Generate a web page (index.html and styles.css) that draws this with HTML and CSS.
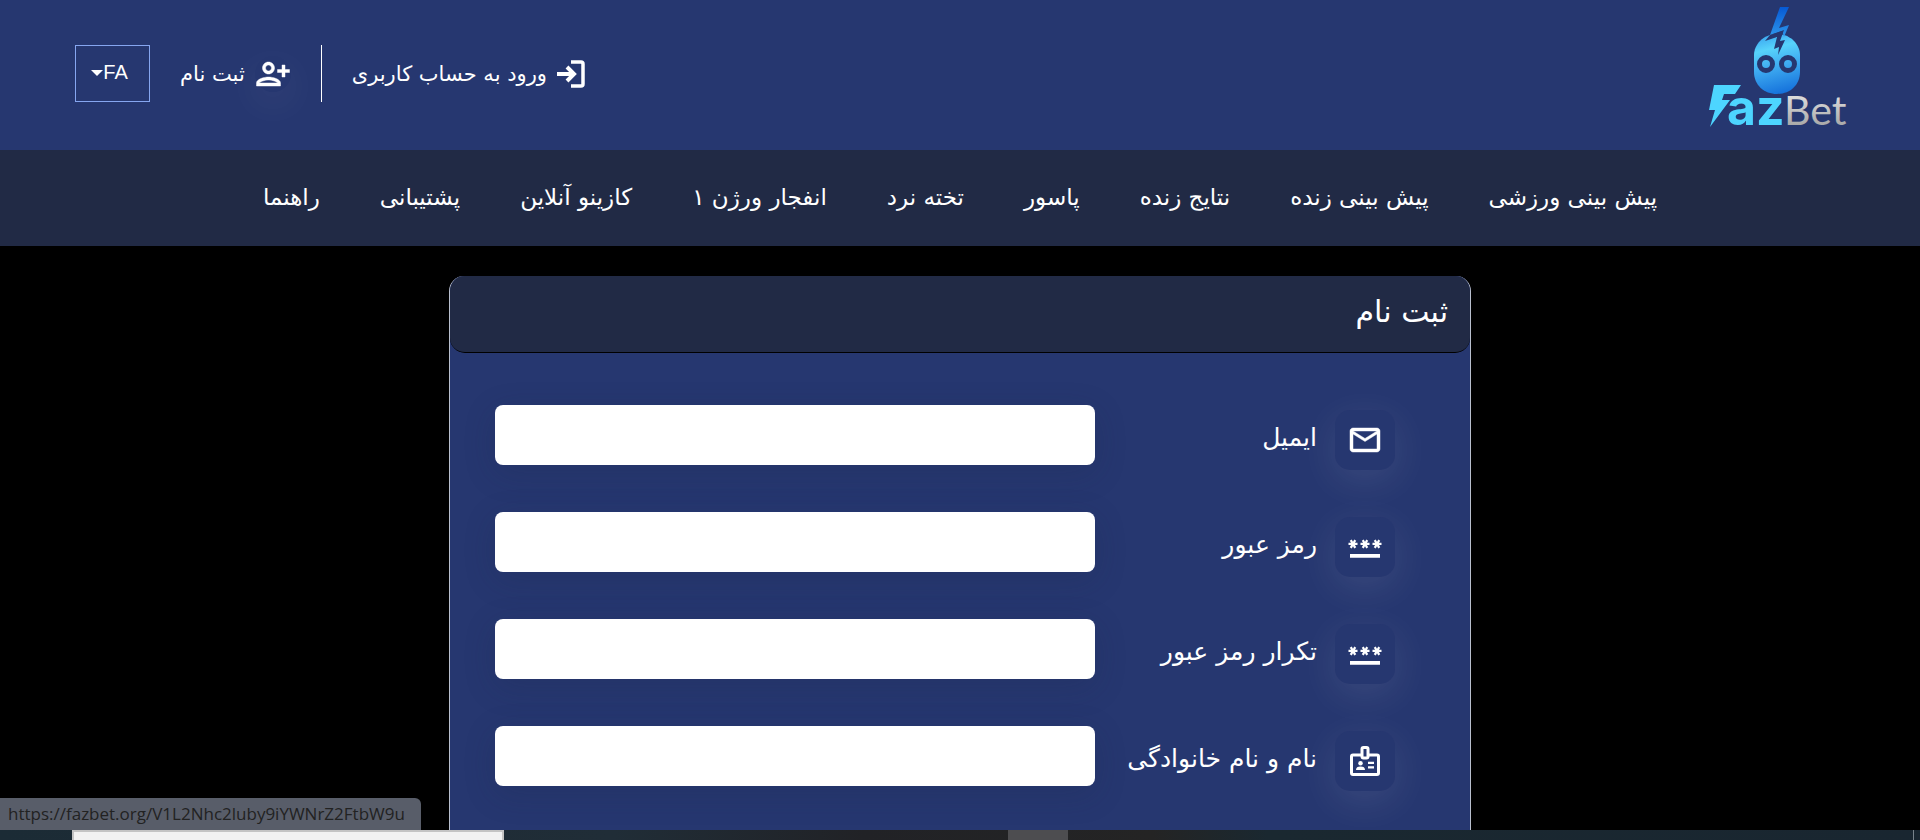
FILE: index.html
```html
<!DOCTYPE html>
<html lang="fa" dir="rtl">
<head>
    <meta charset="utf-8">
    <title>FazBet</title>
    <link rel="stylesheet" href="styles.css">
</head>
<body>
    <div class="page">
        <header class="header">
            <a class="logo" href="#" aria-label="FazBet">
                <svg width="140" height="136" viewBox="0 0 140 136">
                    <defs>
                        <linearGradient id="face" x1="0.3" y1="0" x2="0.5" y2="1">
                            <stop offset="0" stop-color="#3aa5f0"/>
                            <stop offset="0.25" stop-color="#57d3fb"/>
                            <stop offset="0.5" stop-color="#43b2f3"/>
                            <stop offset="1" stop-color="#1673dc"/>
                        </linearGradient>
                        <linearGradient id="bolt" x1="0" y1="0" x2="0" y2="1">
                            <stop offset="0" stop-color="#0659d4"/>
                            <stop offset="1" stop-color="#2e97ec"/>
                        </linearGradient>
                        <linearGradient id="silver" x1="0" y1="0" x2="0" y2="1">
                            <stop offset="0.2" stop-color="#dedede"/>
                            <stop offset="1" stop-color="#999"/>
                        </linearGradient>
                    </defs>
                    <path fill="url(#face)" d="M45 48c0-10 9-21 23-21s23 11 23 21v17c0 13-10 22-23 22S45 78 45 65z"/>
                    <path fill="url(#bolt)" d="M71 0h9L70 21l10-3-5 12-2-6-12 4z"/>
                    <path fill="#263770" d="M56 34l5-6 14-5-4 11 5-1-7 15 1-8-5 2 3-12z"/>
                    <circle cx="57" cy="57" r="6.500" fill="none" stroke="#263770" stroke-width="5"/>
                    <circle cx="79" cy="57" r="6.500" fill="none" stroke="#263770" stroke-width="5"/>
                    <path fill="#4dd5ff" d="M5 78h27l-6 9H15l-2 6h8L1 120l5-17H0z"/>
                    <text class="logo-az" x="18" y="118">az</text>
                    <text class="logo-bet" x="75" y="118" fill="url(#silver)">Bet</text>
                </svg>
            </a>
            <div class="account">
                <a class="account-link" href="#">
                    <svg width="28" height="28" viewBox="0 0 28 28" fill="none" stroke="#fff">
                        <path stroke-width="3.500" d="M14 2h10q2 0 2 2v20q0 2-2 2H14"/>
                        <path stroke-width="4" d="M0 14h17M10 7l7 7-7 7"/>
                    </svg>
                    <span>ورود به حساب کاربری</span>
                </a>
                <a class="account-link register" href="#">
                    <span class="register-icon">
                        <svg width="36" height="36" viewBox="0 0 24 24" fill="#fff" stroke="#fff" stroke-width="0.300">
                            <path d="M13 8c0-2.210-1.790-4-4-4S5 5.790 5 8s1.790 4 4 4 4-1.790 4-4zm-2 0c0 1.100-.9 2-2 2s-2-.9-2-2 .9-2 2-2 2 .9 2 2zM1 18v2h16v-2c0-2.660-5.330-4-8-4s-8 1.340-8 4zm2 0c.2-.71 3.300-2 6-2 2.690 0 5.770 1.280 6 2H3zM20 14v-3h3V9h-3V6h-2v3h-3v2h3v3h2z"/>
                        </svg>
                    </span>
                    <span>ثبت نام</span>
                </a>
                <button class="lang" type="button">FA<span class="caret"></span></button>
            </div>
        </header>

        <nav class="nav">
            <a href="#">پیش بینی ورزشی</a>
            <a href="#">پیش بینی زنده</a>
            <a href="#">نتایج زنده</a>
            <a href="#">پاسور</a>
            <a href="#">تخته نرد</a>
            <a href="#">انفجار ورژن ۱</a>
            <a href="#">کازینو آنلاین</a>
            <a href="#">پشتیبانی</a>
            <a href="#">راهنما</a>
        </nav>

        <main class="card">
            <h1 class="card-title">ثبت نام</h1>
            <form class="form">
                <div class="row">
                    <span class="icon">
                        <svg width="36" height="36" viewBox="0 0 24 24" fill="#fff" stroke="#fff" stroke-width="0.300">
                            <path d="M22 6c0-1.100-.9-2-2-2H4c-1.100 0-2 .9-2 2v12c0 1.100.9 2 2 2h16c1.100 0 2-.9 2-2V6zm-2 0l-8 5-8-5h16zm0 12H4V8l8 5 8-5v10z"/>
                        </svg>
                    </span>
                    <label for="email">ایمیل</label>
                    <input type="email" id="email">
                </div>
                <div class="row">
                    <span class="icon">
                        <svg width="36" height="36" viewBox="0 0 24 24" fill="#fff">
                            <path d="M2 16.700h20v2.500H2v-2.500zm1.150-3.750L4 11.470l.85 1.480 1.300-.75-.85-1.480H7v-1.500H5.300l.85-1.470L4.850 7 4 8.470 3.150 7l-1.300.75.85 1.470H1v1.500h1.700l-.85 1.480 1.300.75zm6.700-.75l1.300.75.85-1.480.85 1.480 1.300-.75-.85-1.480H15v-1.500h-1.700l.85-1.470-1.300-.75L12 8.470 11.150 7l-1.300.75.85 1.470H9v1.500h1.700l-.85 1.480zM23 9.220h-1.700l.85-1.470-1.300-.75L20 8.470 19.150 7l-1.300.75.85 1.470H17v1.500h1.700l-.85 1.480 1.300.75.85-1.480.85 1.480 1.300-.75-.85-1.480H23v-1.500z"/>
                        </svg>
                    </span>
                    <label for="password">رمز عبور</label>
                    <input type="password" id="password">
                </div>
                <div class="row">
                    <span class="icon">
                        <svg width="36" height="36" viewBox="0 0 24 24" fill="#fff">
                            <path d="M2 16.700h20v2.500H2v-2.500zm1.150-3.750L4 11.470l.85 1.480 1.300-.75-.85-1.480H7v-1.500H5.300l.85-1.470L4.850 7 4 8.470 3.150 7l-1.300.75.85 1.470H1v1.500h1.700l-.85 1.480 1.300.75zm6.700-.75l1.300.75.85-1.480.85 1.480 1.300-.75-.85-1.480H15v-1.500h-1.700l.85-1.470-1.300-.75L12 8.470 11.150 7l-1.300.75.85 1.470H9v1.500h1.700l-.85 1.480zM23 9.220h-1.700l.85-1.470-1.300-.75L20 8.470 19.150 7l-1.300.75.85 1.470H17v1.500h1.700l-.85 1.480 1.300.75.85-1.480.85 1.480 1.300-.75-.85-1.480H23v-1.500z"/>
                        </svg>
                    </span>
                    <label for="repeat">تکرار رمز عبور</label>
                    <input type="password" id="repeat">
                </div>
                <div class="row">
                    <span class="icon">
                        <svg width="36" height="36" viewBox="0 0 24 24" fill="none" stroke="#fff" stroke-width="2">
                            <path d="M10 8H4q-1 0-1 1v11q0 1 1 1h16q1 0 1-1V9q0-1-1-1h-6"/>
                            <rect x="10" y="3" width="4" height="7" rx="1"/>
                            <circle cx="9" cy="13.500" r="1.500" fill="#fff" stroke="none"/>
                            <path fill="#fff" stroke="none" d="M6 18q0-2.300 3-2.300t3 2.300z"/>
                            <path stroke-width="1.500" d="M14 13.200h4M14 16.300h4"/>
                        </svg>
                    </span>
                    <label for="fullname">نام و نام خانوادگی</label>
                    <input type="text" id="fullname">
                </div>
            </form>
        </main>

        <div class="status" dir="ltr">https://fazbet.org/V1L2Nhc2luby9iYWNrZ2FtbW9u</div>
    </div>

    <div class="taskbar" dir="ltr">
        <div class="taskbar-search"></div>
        <div class="taskbar-app"></div>
        <div class="taskbar-edge"></div>
    </div>
</body>
</html>
```
FILE: styles.css
```css
* {
    box-sizing: border-box;
}

body {
    margin: 0;
    height: 100vh;
    display: flex;
    flex-direction: column;
    overflow: hidden;
    background-color: #000;
    color: #fff;
    font-family: "DejaVu Sans", sans-serif;
}

a {
    color: #fff;
    text-decoration: none;
}

svg {
    display: block;
    overflow: visible;
}

.page {
    position: relative;
    flex: 1;
    min-height: 0;
    overflow: hidden;
}

.header {
    display: flex;
    justify-content: space-between;
    height: 150px;
    padding: 0 71px 0 75px;
    background-color: #263770;
}

.logo {
    padding-top: 7px;
}

.logo-az,
.logo-bet {
    direction: ltr;
    text-anchor: start;
}

.logo-az {
    font: bold 50px Inter, sans-serif;
    fill: #4dd5ff;
}

.logo-bet {
    font: 41px Lato, sans-serif;
}

.account {
    display: flex;
    align-items: center;
    height: 57px;
    margin-top: 45px;
}

.account-link {
    display: flex;
    align-items: center;
    gap: 10px;
    height: 57px;
    padding-left: 30px;
    font-size: 21px;
}

.register {
    padding-right: 30px;
    border-right: 1px solid #fff;
}

.register-icon {
    border-radius: 50%;
    box-shadow: 0 12px 40px rgba(255, 255, 255, 0.08);
}

.lang {
    display: flex;
    align-items: center;
    justify-content: center;
    width: 75px;
    height: 57px;
    padding: 0 6px 2px 0;
    border: 1px solid #86a6f0;
    background: none;
    color: #fff;
    font: 20px "Liberation Sans", sans-serif;
}

.caret {
    border: 6px solid transparent;
    border-top-color: #fff;
    border-bottom: 0;
}

/* main menu */
.nav {
    display: flex;
    justify-content: center;
    gap: 60px;
    height: 96px;
    line-height: 94px;
    background-color: #212a45;
    font-size: 23px;
    white-space: nowrap;
}

/* registration card */
.card {
    width: 1022px;
    max-width: 100%;
    margin: 30px auto 0;
    border: 1px solid #b9bfce;
    border-top: 0;
    border-radius: 15px;
    background-color: #263770;
}

.card-title {
    height: 77px;
    margin: 0;
    padding: 0 22px;
    border-bottom: 1px solid #000;
    border-radius: 15px;
    background-color: #212a45;
    font-size: 30px;
    font-weight: normal;
    line-height: 72px;
}

.form {
    display: flex;
    flex-direction: column;
    gap: 47px;
    padding: 52px 75px 100px 45px;
}

.row {
    display: flex;
    align-items: center;
    height: 60px;
}

.icon {
    display: flex;
    align-items: center;
    justify-content: center;
    width: 60px;
    height: 60px;
    margin-top: 9px;
    border-radius: 15px;
    background-color: #263770;
    box-shadow: 0 10px 40px rgba(255, 255, 255, 0.1);
}

.row label {
    flex: 1;
    padding-top: 4px;
    padding-right: 18px;
    font-size: 25px;
    white-space: nowrap;
}

.row input {
    width: 600px;
    height: 60px;
    padding: 0 20px;
    border: 0;
    border-radius: 8px;
    background-color: #fff;
    box-shadow: 0 8px 32px rgba(32, 40, 70, 0.2);
    font-size: 20px;
}

/* link address shown by the browser */
.status {
    position: absolute;
    left: 0;
    bottom: 0;
    height: 32px;
    padding: 0 16px 0 8px;
    border-top-right-radius: 6px;
    background-color: #585d69;
    color: #222;
    font: 17px/32px "Open Sans", sans-serif;
}

.taskbar {
    display: flex;
    height: 10px;
    padding: 0 6px 0 72px;
    background: linear-gradient(to right, #1b2b35, #202d37 32%, #212226 45%, #242424 60%, #1a2830 66%, #192630);
}

.taskbar-search {
    width: 432px;
    border: 2px solid #c4c4c4;
    border-bottom: 0;
    background-color: #f2f2f2;
}

.taskbar-app {
    width: 60px;
    margin-left: 504px;
    background-color: #4d4d50;
}

.taskbar-edge {
    width: 1px;
    margin-left: auto;
    background-color: #77828a;
}
```
